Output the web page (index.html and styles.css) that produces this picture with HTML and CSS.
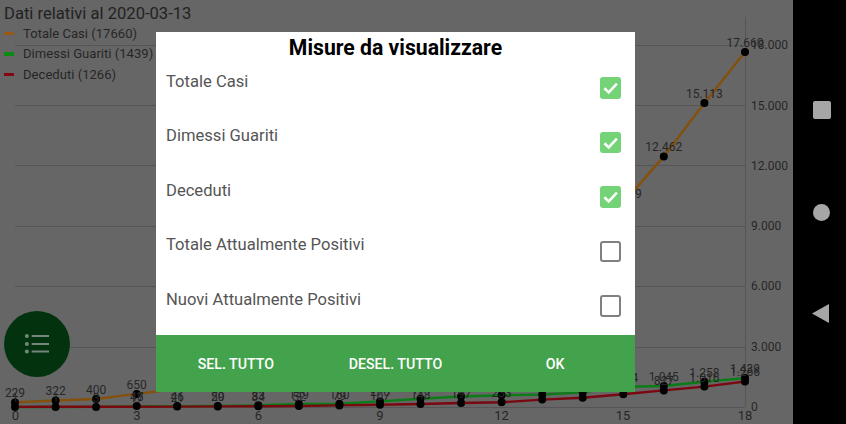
FILE: index.html
```html
<!DOCTYPE html>
<html lang="it">
<head>
<meta charset="utf-8">
<title>Dati relativi al 2020-03-13</title>
<link rel="stylesheet" href="styles.css">
</head>
<body>
<div class="device">
  <main class="screen">
    <svg class="chart" viewBox="0 0 793 424" width="793" height="424" aria-label="Grafico">
      <path class="grid" d="M15 45.5H745M15 105.5H745M15 165.5H745M15 226.5H745M15 286.5H745M15 347.5H745M15 407.5H745M745.5 17V407"/>
      <g class="axis">
        <text x="751" y="49">18.000</text><text x="751" y="109.5">15.000</text><text x="751" y="169.5">12.000</text>
        <text x="751" y="230">9.000</text><text x="751" y="290">6.000</text><text x="751" y="351">3.000</text><text x="751" y="411">0</text>
      </g>
      <g class="axis mid">
        <text x="15.5" y="420">0</text><text x="137" y="420">3</text><text x="258.5" y="420">6</text><text x="380" y="420">9</text>
        <text x="501.5" y="420">12</text><text x="623" y="420">15</text><text x="745" y="420">18</text>
      </g>
      <path class="line orange" d="M15 402.4L55.6 400.5L96.1 399L136.7 393.9L177.2 389.1L217.8 384.3L258.3 372.9L298.9 366.1L339.4 356.7L380 344.9L420.5 329.4L461.1 313.8L501.6 288.7L542.2 258.7L582.7 222.6L623.3 202.9L663.8 156.4L704.4 103.1L745 51.9"/>
      <path class="line green" d="M15 407L55.6 407L96.1 406.9L136.7 406.1L177.2 406.1L217.8 406L258.3 405.3L298.9 404L339.4 403.8L380 401.4L420.5 398.7L461.1 396.5L501.6 395.2L542.2 394.5L582.7 392.4L623.3 386.8L663.8 386L704.4 381.7L745 378.1"/>
      <path class="line red" d="M15 406.9L55.6 406.8L96.1 406.8L136.7 406.7L177.2 406.6L217.8 406.4L258.3 406.3L298.9 406L339.4 405.4L380 404.8L420.5 404L461.1 403L501.6 402.3L542.2 399.6L582.7 397.7L623.3 394.3L663.8 390.4L704.4 386.6L745 381.5"/>
      <path class="dots" d="M15 402.4h0M55.6 400.5h0M96.1 399h0M136.7 393.9h0M623.3 202.9h0M663.8 156.4h0M704.4 103.1h0M745 51.9h0"/>
      <path class="dots" d="M15 407h0M55.6 407h0M96.1 406.9h0M136.7 406.1h0M177.2 406.1h0M217.8 406h0M258.3 405.3h0M298.9 404h0M339.4 403.8h0M380 401.4h0M420.5 398.7h0M461.1 396.5h0M501.6 395.2h0M542.2 394.5h0M582.7 392.4h0M623.3 386.8h0M663.8 386h0M704.4 381.7h0M745 378.1h0"/>
      <path class="dots" d="M177.2 406.6h0M217.8 406.4h0M258.3 406.3h0M298.9 406h0M339.4 405.4h0M380 404.8h0M420.5 404h0M461.1 403h0M501.6 402.3h0M542.2 399.6h0M582.7 397.7h0M623.3 394.3h0M663.8 390.4h0M704.4 386.6h0M745 381.5h0"/>
      <g class="values">
        <text x="15" y="397">229</text><text x="55.6" y="395">322</text><text x="96.1" y="394">400</text><text x="136.7" y="389">650</text>
        <text x="623.3" y="198">10.149</text><text x="663.8" y="151">12.462</text><text x="704.4" y="98">15.113</text><text x="745" y="47">17.660</text>
        <text x="15" y="402">1</text><text x="55.6" y="402">1</text><text x="96.1" y="402">3</text><text x="136.7" y="401">45</text>
        <text x="177.2" y="401">46</text><text x="217.8" y="401">50</text><text x="258.3" y="400">83</text><text x="298.9" y="399">149</text>
        <text x="339.4" y="399">160</text><text x="380" y="396">276</text><text x="420.5" y="394">414</text><text x="461.1" y="392">523</text>
        <text x="501.6" y="390">589</text><text x="623.3" y="382">1.004</text><text x="663.8" y="381">1.045</text><text x="704.4" y="377">1.258</text><text x="745" y="373">1.439</text>
        <text x="136.7" y="402">17</text><text x="177.2" y="402">21</text><text x="217.8" y="401">29</text><text x="258.3" y="401">34</text>
        <text x="298.9" y="401">52</text><text x="339.4" y="400">79</text><text x="380" y="400">107</text><text x="420.5" y="399">148</text>
        <text x="461.1" y="398">197</text><text x="501.6" y="397">233</text><text x="663.8" y="385">827</text><text x="704.4" y="382">1.016</text><text x="745" y="376">1.266</text>
      </g>
    </svg>

    <h1 class="chart-title">Dati relativi al 2020-03-13</h1>
    <ul class="legend">
      <li class="legend-item"><span class="swatch swatch-orange"></span>Totale Casi (17660)</li>
      <li class="legend-item"><span class="swatch swatch-green"></span>Dimessi Guariti (1439)</li>
      <li class="legend-item"><span class="swatch swatch-red"></span>Deceduti (1266)</li>
    </ul>

    <button class="fab" aria-label="Misure">
      <svg viewBox="0 0 24 24" width="32" height="32">
        <path d="M8 5.2h13v1.6H8zM8 11.2h13v1.6H8zM8 16.8h13v1.6H8z"/>
        <circle cx="4.4" cy="6" r="1.5"/><circle cx="4.4" cy="12" r="1.5"/><circle cx="4.4" cy="17.6" r="1.5"/>
      </svg>
    </button>

    <div class="scrim">
      <section class="dialog">
        <h2 class="dialog-title">Misure da visualizzare</h2>
        <div class="options">
          <div class="option"><span>Totale Casi</span>
            <span class="box checked"><svg viewBox="0 0 22 22" width="21.5" height="21.5"><path d="M4.5 11.5l4.4 4.2 8.4-8.9"/></svg></span></div>
          <div class="option"><span>Dimessi Guariti</span>
            <span class="box checked"><svg viewBox="0 0 22 22" width="21.5" height="21.5"><path d="M4.5 11.5l4.4 4.2 8.4-8.9"/></svg></span></div>
          <div class="option"><span>Deceduti</span>
            <span class="box checked"><svg viewBox="0 0 22 22" width="21.5" height="21.5"><path d="M4.5 11.5l4.4 4.2 8.4-8.9"/></svg></span></div>
          <div class="option"><span>Totale Attualmente Positivi</span><span class="box"></span></div>
          <div class="option"><span>Nuovi Attualmente Positivi</span><span class="box"></span></div>
        </div>
        <div class="actions">
          <button class="action">SEL. TUTTO</button>
          <button class="action">DESEL. TUTTO</button>
          <button class="action">OK</button>
        </div>
      </section>
    </div>
  </main>

  <nav class="navbar" aria-label="Navigazione">
    <span class="nav-square"></span>
    <span class="nav-circle"></span>
    <svg class="nav-back" viewBox="0 0 17 19" width="17" height="19"><path d="M0 9.5L17 0V19Z"/></svg>
  </nav>
</div>
</body>
</html>
```
FILE: styles.css
```css
* { box-sizing: border-box; }
html, body { margin: 0; height: 100%; overflow: hidden; background: #000; }
body { font-family: Roboto, "Liberation Sans", sans-serif; }
button { font: inherit; border: 0; padding: 0; background: none; }

.device { display: flex; width: 846px; height: 424px; }
.screen { position: relative; width: 793px; height: 424px; background: #666; overflow: hidden; flex: none; }

.chart { position: absolute; left: 0; top: 0; display: block; }
.grid { fill: none; stroke: #555; stroke-width: 1; }
.axis text { font-size: 12px; fill: #262626; }
.axis.mid text { font-size: 13px; text-anchor: middle; }
.line { fill: none; stroke-width: 2.4; }
.orange { stroke: #84500c; }
.green { stroke: #0a7d16; }
.red { stroke: #7a0810; }
.dots { fill: none; stroke: #000; stroke-width: 8; stroke-linecap: round; }
.values text { font-size: 12px; fill: #262626; text-anchor: middle; }

.chart-title { position: absolute; left: 4px; top: 4px; margin: 0; font-size: 16.6px; line-height: 20px; font-weight: 400; color: #222; }
.legend { position: absolute; left: 4px; top: 23px; margin: 0; padding: 0; list-style: none; }
.legend-item { display: flex; align-items: center; height: 20.5px; font-size: 13.1px; color: #262626; }
.swatch { width: 10px; height: 3.5px; margin-right: 9px; }
.swatch-orange { background: #965a14; }
.swatch-green { background: #0a8c14; }
.swatch-red { background: #82050f; }

.fab { position: absolute; left: 4px; top: 311px; width: 66px; height: 66px; border-radius: 50%; background: #02330e; display: flex; align-items: center; justify-content: center; }
.fab svg { fill: #75867a; }

.scrim { position: absolute; inset: 0; padding-right: 2px; display: flex; align-items: center; justify-content: center; }
.dialog { width: 479px; height: 360px; background: #fff; display: flex; flex-direction: column; }
.dialog-title { margin: 0; height: 29px; font-size: 21.2px; line-height: 31px; font-weight: 700; text-align: center; color: #000; }
.options { flex: 1; padding: 0 14px 0 10px; }
.option { display: flex; justify-content: space-between; height: 54.5px; font-size: 16.6px; line-height: 20px; color: #555; }
.option > span:first-child { margin-top: 10.5px; }
.box { width: 21.5px; height: 21.5px; margin-top: 16.3px; border: 2.6px solid #808080; border-radius: 3px; flex: none; }
.box.checked { border: 0; background: #74d277; }
.box svg { display: block; fill: none; stroke: #fff; stroke-width: 2.6; }

.actions { height: 57px; background: #43a24c; display: grid; grid-template-columns: repeat(3, 1fr); }
.action { color: #fff; font-size: 14.2px; font-weight: 500; }

.navbar { flex: 1; background: #000; display: flex; flex-direction: column; align-items: center; padding: 101px 0 0 4px; }
.nav-square { width: 18px; height: 18px; border-radius: 2px; background: #a6a6a6; }
.nav-circle { width: 17px; height: 17px; border-radius: 50%; background: #a6a6a6; margin-top: 85px; }
.nav-back { fill: #a6a6a6; margin-top: 83px; margin-left: -2px; }
```
